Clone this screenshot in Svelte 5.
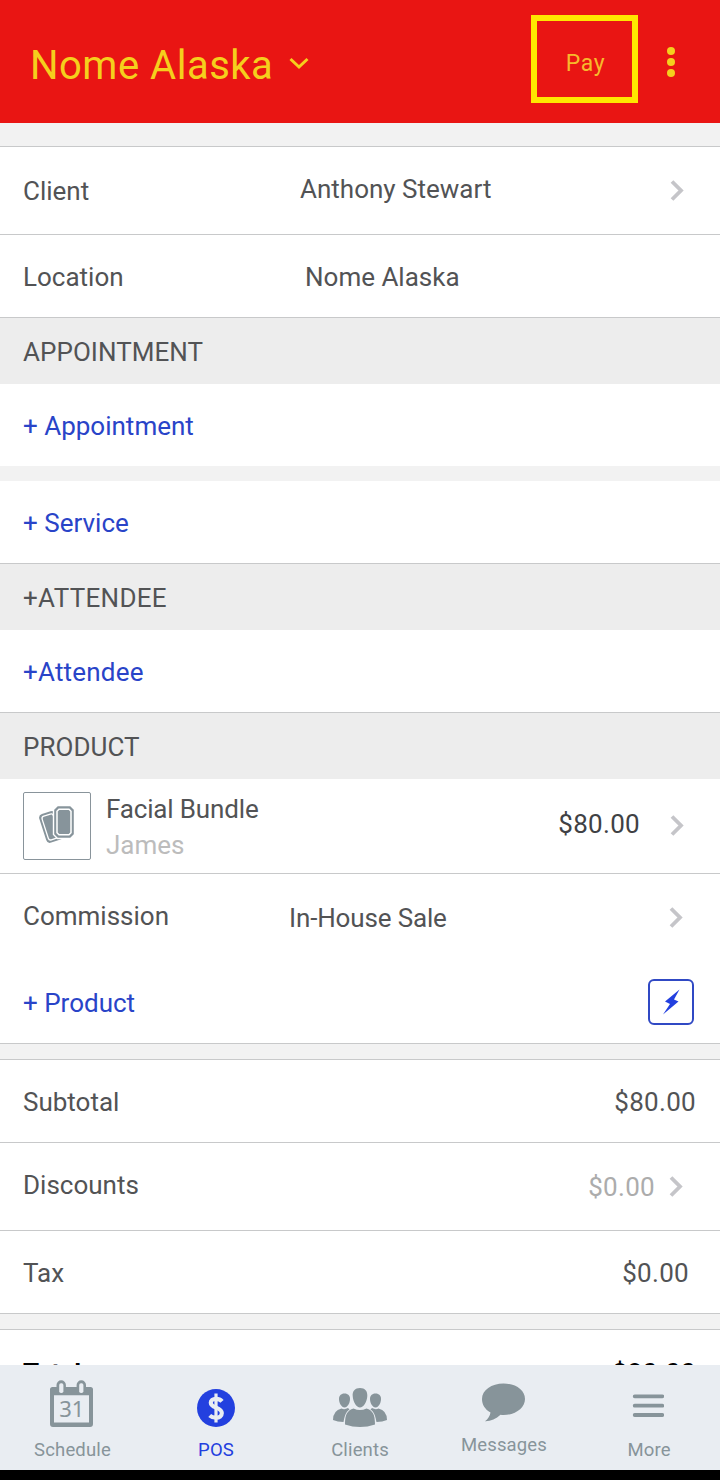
<script lang="ts">
  type Tab = 'Schedule' | 'POS' | 'Clients' | 'Messages' | 'More'

  const tabs: Tab[] = ['Schedule', 'POS', 'Clients', 'Messages', 'More']

  let location = $state('Nome Alaska')
  let active: Tab = $state('POS')
</script>

{#snippet chevron()}
  <svg class="chevron" width="14" height="22" viewBox="0 0 14 22">
    <path d="M2 1.500 11 10.500 2 19.500" fill="none" stroke="currentColor" stroke-width="3.8" />
  </svg>
{/snippet}

<div class="screen">
  <header>
    <button type="button" class="title">
      <span>{location}</span>
      <svg width="20" height="14" viewBox="0 0 20 14">
        <path d="M1.500 2 10 10 18.500 2" fill="none" stroke="currentColor" stroke-width="3" />
      </svg>
    </button>
    <button type="button" class="pay"><span>Pay</span></button>
    <button type="button" class="menu" aria-label="Menu">
      <svg width="8" height="30" viewBox="0 0 8 30">
        <circle cx="4" cy="4" r="4" />
        <circle cx="4" cy="15" r="4" />
        <circle cx="4" cy="26" r="4" />
      </svg>
    </button>
  </header>

  <main>
    <div class="gap top"></div>
    <div class="row tall line">
      <span class="label client">Client</span>
      <span class="value raised">Anthony Stewart</span>
      {@render chevron()}
    </div>
    <div class="row line">
      <span class="label location">Location</span>
      <span class="value">{location}</span>
    </div>

    <h2>APPOINTMENT</h2>
    <div class="row plain"><button type="button" class="add">+ Appointment</button></div>
    <div class="gap bare"></div>
    <div class="row line"><button type="button" class="add">+ Service</button></div>

    <h2 class="wide">+ATTENDEE</h2>
    <div class="row line"><button type="button" class="add tight">+Attendee</button></div>

    <h2>PRODUCT</h2>
    <div class="row item line">
      <div class="thumb">
        <svg width="36" height="40" viewBox="0 0 36 40">
          <g transform="rotate(-18 12 24)">
            <rect x="4" y="7" width="17" height="30" rx="4" fill="#87949b" />
            <rect x="6.6" y="9.6" width="11.8" height="24.8" rx="2.5" fill="#87949b" stroke="#fff" stroke-width="1.3" />
          </g>
          <path d="M18.500 .500h13l4 4v25l-4 4H18.500l-4-4V4.500z" fill="#87949b" stroke="#fff" stroke-width="1.4" />
          <path d="M20 4.300h10l2 2v21.400l-2 2H20l-2-2V6.300z" fill="#87949b" stroke="#fff" stroke-width="1.500" />
        </svg>
      </div>
      <div class="item-text">
        <span class="name">Facial Bundle</span>
        <span class="staff">James</span>
      </div>
      <span class="amount price">$80.00</span>
      {@render chevron()}
    </div>
    <div class="row commission">
      <span class="label sale">Commission</span>
      <span class="value sale-value">In-House Sale</span>
      {@render chevron()}
    </div>
    <div class="row line">
      <button type="button" class="add">+ Product</button>
      <button type="button" class="quick" aria-label="Quick add">
        <svg width="18" height="26" viewBox="0 0 18 26">
          <path d="M17.500 .500 3 12.500 8 15 1 25.500 16.500 12.500 12 10.500z" fill="#2340df" />
        </svg>
      </button>
    </div>

    <div class="gap"></div>
    <div class="row line">
      <span class="label">Subtotal</span>
      <span class="amount">$80.00</span>
    </div>
    <div class="row tall line discounts">
      <span class="label raised">Discounts</span>
      <span class="amount muted">$0.00</span>
      {@render chevron()}
    </div>
    <div class="row line tax">
      <span class="label">Tax</span>
      <span class="amount">$0.00</span>
    </div>
    <div class="gap"></div>
    <div class="row total">
      <span>Total</span>
      <span class="amount">$80.00</span>
    </div>
  </main>

  <nav>
    {#each tabs as tab}
      <button
        type="button"
        class="tab {tab.toLowerCase()}"
        class:active={active === tab}
        onclick={() => (active = tab)}
      >
        {#if tab === 'Schedule'}
          <svg width="44" height="48" viewBox="0 0 44 48">
            <path
              fill-rule="evenodd"
              d="M2.500 7h4V5a4.700 4.700 0 0 1 9.400 0v2h10.700V5a4.700 4.700 0 0 1 9.400 0v2h4.500a2.500 2.500 0 0 1 2.500 2.500V44a3 3 0 0 1-3 3H3a3 3 0 0 1-3-3V9.500A2.500 2.500 0 0 1 2.500 7zM4 15.200V42.500h35V15.200z"
              fill="currentColor"
            />
            <rect x="9.200" y="3.300" width="4.200" height="9.700" rx="1.800" fill="#e9edf2" />
            <rect x="29.200" y="3.300" width="4.200" height="9.700" rx="1.800" fill="#e9edf2" />
            <text x="21.800" y="36.800" text-anchor="middle" class="day">31</text>
          </svg>
        {:else if tab === 'POS'}
          <svg width="38" height="38" viewBox="0 0 38 38">
            <circle cx="19" cy="19" r="19" fill="currentColor" />
            <path
              d="M25 12.300C23.500 10.500 21.500 9.800 19 9.800c-3.300 0-5.200 1.500-5.200 4 0 5.700 11 3.900 11 10.200 0 3-2.400 4.700-5.800 4.700-2.500 0-4.700-.7-6.300-2.200"
              fill="none"
              stroke="#e9edf2"
              stroke-width="4.200"
            />
            <path d="M19 4.500v29" stroke="#e9edf2" stroke-width="3.200" />
          </svg>
        {:else if tab === 'Clients'}
          <svg width="54" height="39" viewBox="0 0 54 39" fill="currentColor">
            <path d="M11.500 5.500c3.700 0 5.500 2.400 5.500 5.500 0 4-2.500 8.500-5.500 8.500S6 15 6 11c0-3.100 1.800-5.500 5.500-5.500z" />
            <path d="M42.500 5.500c3.700 0 5.500 2.400 5.500 5.500 0 4-2.500 8.500-5.500 8.500S37 15 37 11c0-3.100 1.800-5.500 5.500-5.500z" />
            <path d="M8.500 20.500q3 1.500 6.500-.5l1.500 1.500C12.500 24 11.500 29 10.500 34Q4.500 34 0 32 0 22.500 8.500 20.500z" />
            <path d="M45.500 20.500q-3 1.500-6.500-.5l-1.500 1.500C41.500 24 42.500 29 43.500 34q6 0 10.500-2 0-9.500-8.500-11.500z" />
            <path d="M27 0c5 0 7.700 3 7.300 8C34 14 30.500 19.500 27 19.500S20 14 19.700 8C19.300 3 22 0 27 0z" />
            <path d="M20.500 20.500q6.500 3 13 0C39.500 22.500 42 26 42 36.500q-15 5-30 0C12 26 14.500 22.500 20.500 20.500z" />
          </svg>
        {:else if tab === 'Messages'}
          <svg width="44" height="39" viewBox="0 0 44 39">
            <path
              d="M21.500 .500C33.500 .500 43 7 43 16S33.500 32 21.500 32q-1.500 0-3-.2C14 36 8.500 38.500 3 38.300c3-2.300 5-5.300 5.500-8.800C3 26.500 0 21.500 0 16 0 7 9.500 .500 21.500 .500z"
              fill="currentColor"
            />
          </svg>
        {:else}
          <svg width="32" height="24" viewBox="0 0 32 24">
            <path d="M2.700 2.300H30.300M2.700 11.700H30.300M2.700 21H30.300" stroke="currentColor" stroke-width="3.800" stroke-linecap="round" />
          </svg>
        {/if}
        <span>{tab}</span>
      </button>
    {/each}
  </nav>
  <div class="system-bar"></div>
</div>

<style>
  :global(body) {
    background: #000;
  }
  .screen {
    display: flex;
    flex-direction: column;
    width: 720px;
    height: 1480px;
    overflow: hidden;
    background: #fff;
    color: #525355;
    font-family: Roboto, sans-serif;
    font-size: 26px;
    line-height: 32px;
    letter-spacing: 0;
  }
  button {
    margin: 0;
    padding: 0;
    border: 0;
    background: none;
    color: inherit;
    font: inherit;
    letter-spacing: inherit;
  }
  svg {
    display: block;
    flex: none;
  }

  header {
    display: flex;
    flex: none;
    box-sizing: border-box;
    height: 123px;
    background: #e91513;
    color: #f5cf1d;
  }
  .title {
    display: flex;
    align-items: center;
    gap: 16px;
    margin-right: auto;
    padding: 8px 0 0 30px;
    font-size: 40px;
    letter-spacing: 0.5px;
  }
  .title svg {
    margin-bottom: 4px;
  }
  .pay {
    box-sizing: border-box;
    width: 107px;
    height: 88px;
    margin-top: 15px;
    padding: 9px 0 0 2px;
    border: 6px solid #ffe600;
    color: #f7b92c;
    font-size: 23px;
    letter-spacing: 0.6px;
  }
  .menu {
    margin: 1px 45px 0 29px;
    fill: currentColor;
  }

  main {
    flex: 1;
    min-height: 0;
    overflow: hidden;
  }
  .gap {
    box-sizing: border-box;
    height: 16px;
    border-bottom: 1px solid #c8c9ca;
    background: #f2f2f2;
  }
  .gap.top {
    height: 24px;
  }
  .gap.bare {
    height: 15px;
    border: 0;
  }
  .row {
    display: flex;
    align-items: center;
    box-sizing: border-box;
    height: 83px;
    padding: 2px 24px 0 23px;
  }
  .row.plain {
    height: 82px;
  }
  .row.tall {
    height: 88px;
    padding: 0 36px 0 23px;
  }
  .line {
    border-bottom: 1px solid #c8c9ca;
  }
  h2 {
    box-sizing: border-box;
    height: 66px;
    margin: 0;
    padding: 18px 23px 0;
    background: #ededed;
    font-size: 26px;
    font-weight: 400;
    letter-spacing: 0.05px;
  }
  .wide {
    letter-spacing: 0.3px;
  }
  .client {
    width: 277px;
  }
  .location {
    width: 282px;
  }
  .sale {
    width: 266px;
    padding-bottom: 3px;
  }
  .sale-value {
    letter-spacing: -0.15px;
  }
  .raised {
    padding-bottom: 4px;
  }
  .chevron {
    margin-left: auto;
    color: #c5c5c9;
  }
  .add {
    color: #2944c8;
  }
  .tight {
    letter-spacing: 0.2px;
  }
  .amount {
    margin-left: auto;
    letter-spacing: 0.3px;
  }

  .row.item {
    height: 95px;
    padding: 0 36px 0 23px;
  }
  .thumb {
    display: grid;
    place-items: center;
    box-sizing: border-box;
    width: 68px;
    height: 68px;
    margin-right: 15px;
    padding: 0 1px 3px 0;
    border: 1px solid #89949b;
    border-radius: 2px;
  }
  .item-text {
    display: grid;
    padding-top: 2px;
    line-height: 36px;
  }
  .name {
    letter-spacing: -0.16px;
  }
  .staff {
    color: #bcbcbc;
  }
  .price {
    margin-right: 30px;
    color: #404144;
    padding-bottom: 4px;
  }
  .price + .chevron {
    margin-left: 0;
  }
  .row.commission {
    height: 87px;
    padding: 0 37px 0 23px;
  }
  .quick {
    display: grid;
    place-items: center;
    box-sizing: border-box;
    width: 46px;
    height: 46px;
    margin: 0 2px 2px auto;
    border: 2px solid #3049c4;
    border-radius: 6px;
  }
  .row.discounts {
    padding-right: 37px;
  }
  .discounts .muted {
    margin-right: 14px;
    color: #acacac;
  }
  .discounts .chevron {
    margin-left: 0;
  }
  .row.tax {
    padding-right: 31px;
  }
  .total {
    color: #000;
    font-weight: 700;
  }

  nav {
    display: grid;
    grid-template-columns: repeat(5, 144px);
    flex: none;
    height: 105px;
    background: #e9edf2;
    color: #87949a;
    font-size: 18.5px;
    line-height: 24px;
    letter-spacing: 0.15px;
  }
  .tab {
    display: flex;
    flex-direction: column;
    align-items: center;
    justify-content: flex-end;
    padding-bottom: 8px;
  }
  .tab svg {
    margin-bottom: 11px;
  }
  .tab.schedule,
  .tab.more {
    padding-left: 1px;
  }
  .tab.schedule svg {
    margin: 0 1px 10px 0;
  }
  .tab.messages {
    padding-bottom: 13px;
  }
  .tab.more {
    padding-left: 2px;
  }
  .tab.more svg {
    margin: 0 3px 20px 0;
  }
  .tab.active {
    color: #2340df;
  }
  .day {
    fill: #87949a;
    font: 22px 'Noto Sans', sans-serif;
    letter-spacing: 0;
  }
  .system-bar {
    flex: none;
    height: 10px;
    background: #000;
  }
</style>
